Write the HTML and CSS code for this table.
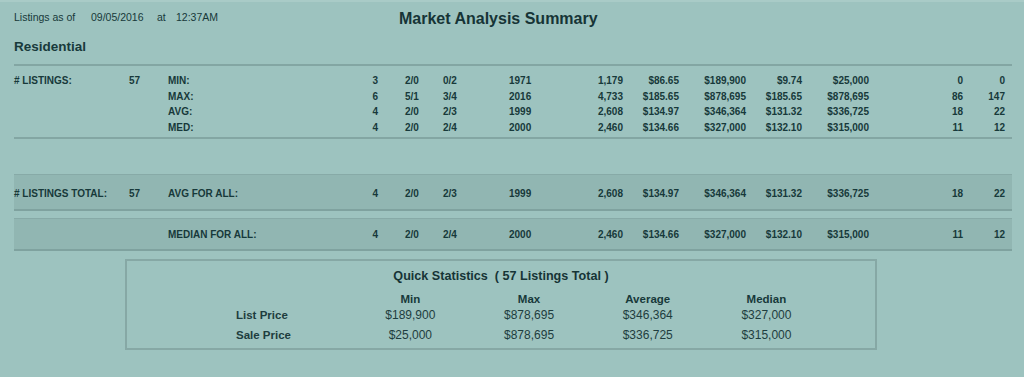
FILE: index.html
```html
<!DOCTYPE html>
<html>
<head>
<meta charset="utf-8">
<link rel="stylesheet" href="styles.css">
</head>
<body>
<div class="page">
  <div class="top">
    <div class="asof">
      <span class="w1">Listings as of</span><span class="w2">09/05/2016</span><span class="w3">at</span><span>12:37AM</span>
    </div>
    <h1 class="title">Market Analysis Summary</h1>
  </div>
  <h2 class="section">Residential</h2>

  <div class="stats">
    <div class="row">
      <span>#&nbsp;LISTINGS:</span><span class="r">57</span><span class="lab">MIN:</span>
      <span class="r">3</span><span class="c5">2/0</span><span>0/2</span><span>1971</span><span class="r">1,179</span><span class="r">$86.65</span><span class="r">$189,900</span><span class="r">$9.74</span><span class="r">$25,000</span><span class="r">0</span><span class="r">0</span>
    </div>
    <div class="row">
      <span></span><span></span><span class="lab">MAX:</span>
      <span class="r">6</span><span class="c5">5/1</span><span>3/4</span><span>2016</span><span class="r">4,733</span><span class="r">$185.65</span><span class="r">$878,695</span><span class="r">$185.65</span><span class="r">$878,695</span><span class="r">86</span><span class="r">147</span>
    </div>
    <div class="row">
      <span></span><span></span><span class="lab">AVG:</span>
      <span class="r">4</span><span class="c5">2/0</span><span>2/3</span><span>1999</span><span class="r">2,608</span><span class="r">$134.97</span><span class="r">$346,364</span><span class="r">$131.32</span><span class="r">$336,725</span><span class="r">18</span><span class="r">22</span>
    </div>
    <div class="row">
      <span></span><span></span><span class="lab">MED:</span>
      <span class="r">4</span><span class="c5">2/0</span><span>2/4</span><span>2000</span><span class="r">2,460</span><span class="r">$134.66</span><span class="r">$327,000</span><span class="r">$132.10</span><span class="r">$315,000</span><span class="r">11</span><span class="r">12</span>
    </div>
  </div>

  <div class="row band band1">
    <span>#&nbsp;LISTINGS TOTAL:</span><span class="r">57</span><span class="lab">AVG FOR ALL:</span>
    <span class="r">4</span><span class="c5">2/0</span><span>2/3</span><span>1999</span><span class="r">2,608</span><span class="r">$134.97</span><span class="r">$346,364</span><span class="r">$131.32</span><span class="r">$336,725</span><span class="r">18</span><span class="r">22</span>
  </div>
  <div class="row band band2">
    <span></span><span></span><span class="lab">MEDIAN FOR ALL:</span>
    <span class="r">4</span><span class="c5">2/0</span><span>2/4</span><span>2000</span><span class="r">2,460</span><span class="r">$134.66</span><span class="r">$327,000</span><span class="r">$132.10</span><span class="r">$315,000</span><span class="r">11</span><span class="r">12</span>
  </div>

  <div class="quick">
    <div class="qtitle">Quick Statistics &nbsp;( 57 Listings Total )</div>
    <div class="qgrid qhead">
      <span></span><span>Min</span><span>Max</span><span>Average</span><span>Median</span>
    </div>
    <div class="qgrid qrow">
      <span class="qlab">List Price</span><span>$189,900</span><span>$878,695</span><span>$346,364</span><span>$327,000</span>
    </div>
    <div class="qgrid qrow qrow2">
      <span class="qlab">Sale Price</span><span>$25,000</span><span>$878,695</span><span>$336,725</span><span>$315,000</span>
    </div>
  </div>
</div>
</body>
</html>
```

FILE: styles.css
```css
html, body {
  margin: 0;
  padding: 0;
}
body {
  background: #9dc3bf;
  border-top: 2px solid #a9cbc7;
  font-family: "Liberation Sans", Arial, sans-serif;
  color: #17393a;
  height: 375px;
  overflow: hidden;
}
.page {
  padding: 0 12px 0 14px;
}
.top {
  display: grid;
  grid-template-columns: 385px 1fr;
  padding-top: 7px;
  height: 20px;
}
.asof {
  display: flex;
  font-size: 10.5px;
  line-height: 17px;
  white-space: nowrap;
}
.asof .w1 { width: 77px; }
.asof .w2 { width: 66px; }
.asof .w3 { width: 19px; }
.title {
  margin: 0;
  font-size: 16px;
  line-height: 20px;
  font-weight: bold;
  color: #163436;
}
.section {
  margin: 9px 0 0 0;
  font-size: 13.5px;
  line-height: 18px;
  font-weight: bold;
  height: 18px;
  padding-bottom: 8px;
  border-bottom: 2px solid #83a6a3;
  color: #183a3b;
}
.stats {
  padding-top: 7px;
  padding-bottom: 1px;
  border-bottom: 2px solid #83a6a3;
}
.row {
  display: grid;
  grid-template-columns: 112px 14px 200px 38px 65px 66px 51px 63px 56px 67px 56px 67px 94px 42px;
  font-size: 10px;
  font-weight: bold;
  line-height: 15.7px;
  white-space: nowrap;
}
.row .r { text-align: right; }
.row .lab { padding-left: 28px; }
.row .c5 { padding-left: 27px; }
.band {
  background: #91b6b2;
  border-top: 1px solid #87aaa7;
  border-bottom: 2px solid #7fa29f;
  line-height: 16px;
}
.band1 {
  margin-top: 35px;
  padding: 11px 0 7px 0;
}
.band2 {
  margin-top: 7px;
  padding: 8px 0 6px 0;
}
.quick {
  margin: 8px 0 0 111px;
  width: 748px;
  border: 2px solid #86a8a5;
  padding: 7px 0 5px 0;
}
.qtitle {
  text-align: center;
  font-size: 12.6px;
  font-weight: bold;
  line-height: 16px;
  color: #163436;
}
.qgrid {
  display: grid;
  grid-template-columns: 115px repeat(4, 118.7px);
  padding-left: 109px;
  line-height: 16px;
  white-space: nowrap;
}
.qgrid span { text-align: center; }
.qgrid .qlab { text-align: left; font-weight: bold; font-size: 11.5px; }
.qhead {
  margin-top: 7.5px;
  font-size: 11.5px;
  font-weight: bold;
}
.qrow {
  font-size: 12px;
  color: #1e3d3e;
}
.qrow2 {
  margin-top: 3.5px;
}
```
